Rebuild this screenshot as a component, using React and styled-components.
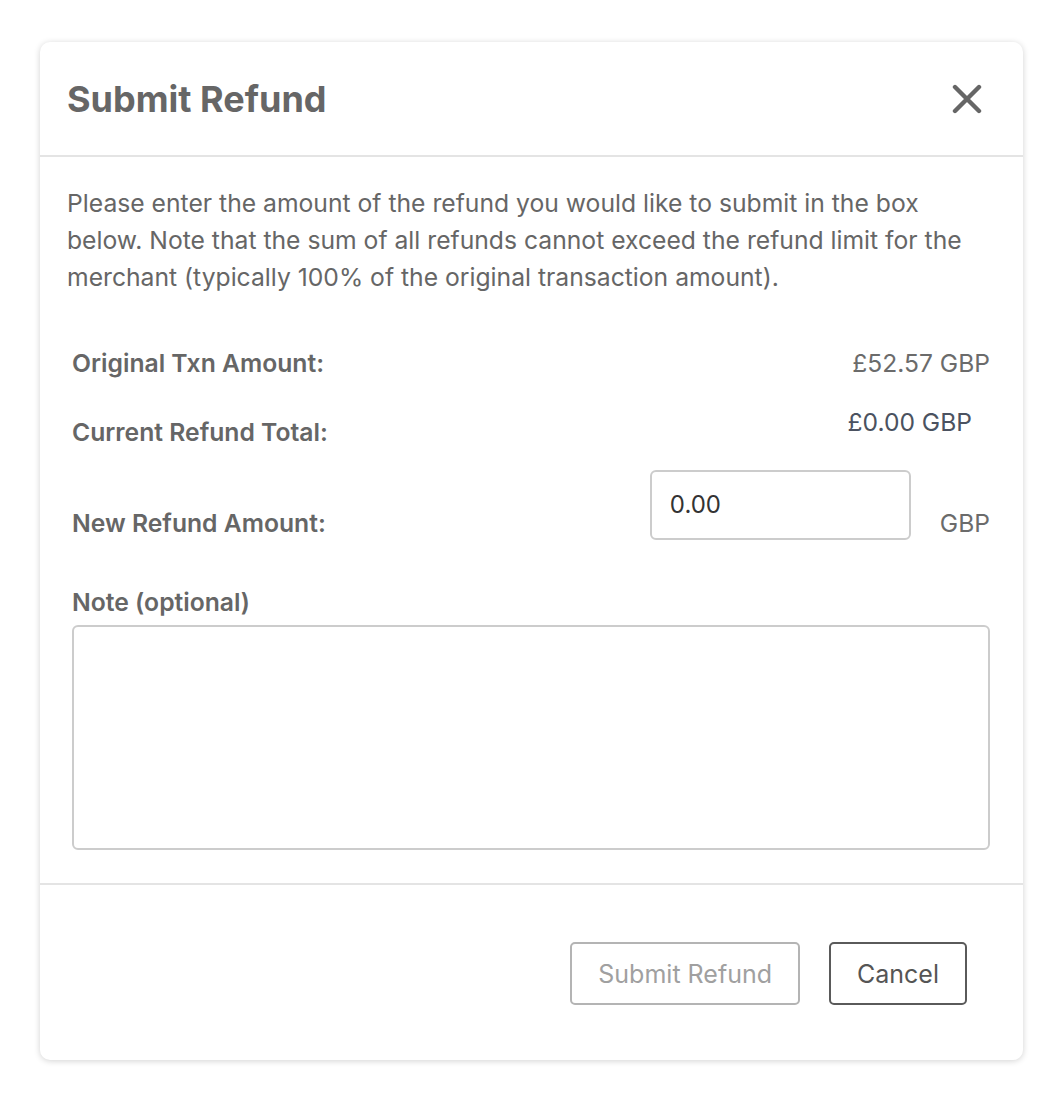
import styled, { createGlobalStyle } from 'styled-components';

const GlobalStyle = createGlobalStyle`
  body {
    margin: 0;
    background: #ffffff;
    font-family: Inter, "Noto Sans", sans-serif;
  }
`;

const Page = styled.div`
  padding: 42px 41px 40px 40px;
`;

const Modal = styled.div`
  width: 983px;
  background: #ffffff;
  border-radius: 10px;
  box-shadow: 0 1px 6px rgba(0, 0, 0, 0.18);
  display: flex;
  flex-direction: column;
`;

const Header = styled.div`
  height: 113px;
  display: flex;
  align-items: center;
  justify-content: space-between;
  padding: 0 38px 0 27px;
  border-bottom: 2px solid #e4e4e4;
`;

const Title = styled.h1`
  margin: 0;
  font-size: 36px;
  font-weight: 700;
  color: #666666;
`;

const CloseButton = styled.button`
  border: none;
  background: none;
  padding: 0;
  width: 36px;
  height: 36px;
  display: flex;
  align-items: center;
  justify-content: center;
  cursor: pointer;
`;

const Body = styled.div`
  padding: 28px 33px 33px 27px;
`;

const Intro = styled.p`
  margin: 0;
  max-width: 912px;
  font-size: 24.7px;
  line-height: 37px;
  color: #666666;
`;

const Rows = styled.div`
  padding-left: 5px;
  display: flex;
  flex-direction: column;
`;

const Row = styled.div`
  display: flex;
  justify-content: space-between;
  align-items: ${({ align }) => align || 'baseline'};
  margin-top: ${({ gap }) => gap}px;
`;

const Label = styled.label`
  font-size: 24.7px;
  font-weight: 600;
  color: #666666;
  line-height: 30px;
  padding-top: ${({ top }) => top || 0}px;
  padding-bottom: ${({ bottom }) => bottom || 0}px;
`;

const Value = styled.span`
  font-size: 24.6px;
  line-height: 30px;
  color: ${({ dark }) => (dark ? '#4b5260' : '#6b6b6b')};
  margin-right: ${({ offset }) => offset || 0}px;
  padding-bottom: ${({ bottom }) => bottom || 0}px;
`;

const AmountGroup = styled.div`
  display: flex;
  align-items: flex-end;
  gap: 29px;
`;

const AmountInput = styled.input`
  box-sizing: border-box;
  width: 261px;
  height: 70px;
  border: 2px solid #cccccc;
  border-radius: 6px;
  padding: 0 18px 2px;
  font-family: Inter, "Noto Sans", sans-serif;
  font-size: 24px;
  color: #333333;
  outline: none;
`;

const Note = styled.textarea`
  box-sizing: border-box;
  width: 100%;
  height: 225px;
  margin-top: 8px;
  border: 2px solid #cccccc;
  border-radius: 6px;
  resize: none;
  outline: none;
  display: block;
`;

const Footer = styled.div`
  border-top: 2px solid #e4e4e4;
  display: flex;
  justify-content: flex-end;
  gap: 29px;
  padding: 57px 56px 55px;
`;

const Button = styled.button`
  box-sizing: border-box;
  height: 63px;
  padding: 0 26px;
  background: #ffffff;
  border: 2px solid ${({ disabled }) => (disabled ? '#b4b4b4' : '#5a5a5a')};
  border-radius: 5px;
  font-family: Inter, "Noto Sans", sans-serif;
  font-size: 25px;
  color: ${({ disabled }) => (disabled ? '#a0a0a0' : '#555555')};
`;

function App() {
  return (
    <>
      <GlobalStyle />
      <Page>
        <Modal>
          <Header>
            <Title>Submit Refund</Title>
            <CloseButton aria-label="Close">
              <svg width="30" height="30" viewBox="0 0 30 30">
                <path d="M3 3 L27 27 M27 3 L3 27" stroke="#666666" strokeWidth="4.4" strokeLinecap="round" />
              </svg>
            </CloseButton>
          </Header>
          <Body>
            <Intro>
              Please enter the amount of the refund you would like to submit in the box below.
              Note that the sum of all refunds cannot exceed the refund limit for the merchant
              (typically 100% of the original transaction amount).
            </Intro>
            <Rows>
              <Row gap={52}>
                <Label>Original Txn Amount:</Label>
                <Value>£52.57 GBP</Value>
              </Row>
              <Row gap={29} align="flex-start">
                <Label top={10}>Current Refund Total:</Label>
                <Value dark offset={18}>£0.00 GBP</Value>
              </Row>
              <Row gap={23} align="flex-end">
                <Label bottom={2}>New Refund Amount:</Label>
                <AmountGroup>
                  <AmountInput defaultValue="0.00" />
                  <Value bottom={2}>GBP</Value>
                </AmountGroup>
              </Row>
              <Row gap={47}>
                <Label>Note (optional)</Label>
              </Row>
              <Note />
            </Rows>
          </Body>
          <Footer>
            <Button disabled>Submit Refund</Button>
            <Button>Cancel</Button>
          </Footer>
        </Modal>
      </Page>
    </>
  );
}

export default App;
